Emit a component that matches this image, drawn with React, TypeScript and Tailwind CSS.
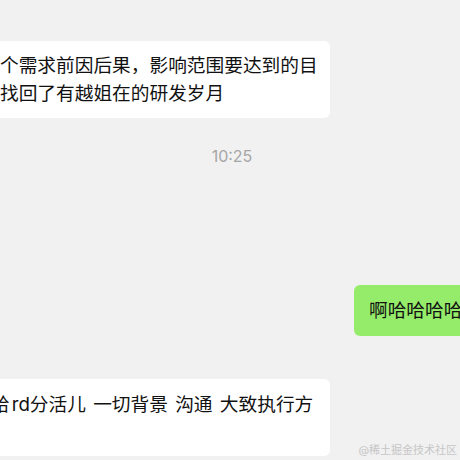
import React from "react";

const App = () => {
  return (
    <div className="relative h-[460px] w-[460px] overflow-hidden bg-[#f1f1f1] font-['Inter','Noto_Sans_CJK_SC',sans-serif] text-[#111111]">
      <div className="pt-[41px]">
        <div className="-ml-[12px] w-[342px] rounded-[6px] bg-white pt-[11px] pb-[10px] pl-[12px] pr-[10px] text-[18.7px] leading-[28px]">
          <p className="whitespace-nowrap">个需求前因后果，影响范围要达到的目</p>
          <p className="whitespace-nowrap">找回了有越姐在的研发岁月</p>
        </div>
      </div>

      <div className="mt-[28px] pl-[4px] text-center text-[16px] leading-[20px] text-[#a6a6a6]">
        10:25
      </div>

      <div className="mt-[119px] flex">
        <div className="ml-[354px] shrink-0 whitespace-nowrap rounded-[6px] bg-[#95ec6a] py-[11.5px] pl-[15px] pr-[14px] text-[18.7px] leading-[28px]">
          啊哈哈哈哈哈哈哈
        </div>
      </div>

      <div className="mt-[43px]">
        <div className="-ml-[12px] w-[342px] rounded-[6px] bg-white pt-[12px] pb-[9px] pl-[3px] pr-[10px] text-[18.7px] leading-[28px]">
          <p className="whitespace-nowrap [word-spacing:2px]">
            给<span className="ml-[2px]">rd</span>分活儿 一切背景 沟通 大致执行方
          </p>
          <p>&nbsp;</p>
        </div>
      </div>

      <div className="absolute bottom-[2px] right-[3px] text-[11px] leading-[16px] text-[#c6c6c6]">
        @稀土掘金技术社区
      </div>
    </div>
  );
};

export default App;
